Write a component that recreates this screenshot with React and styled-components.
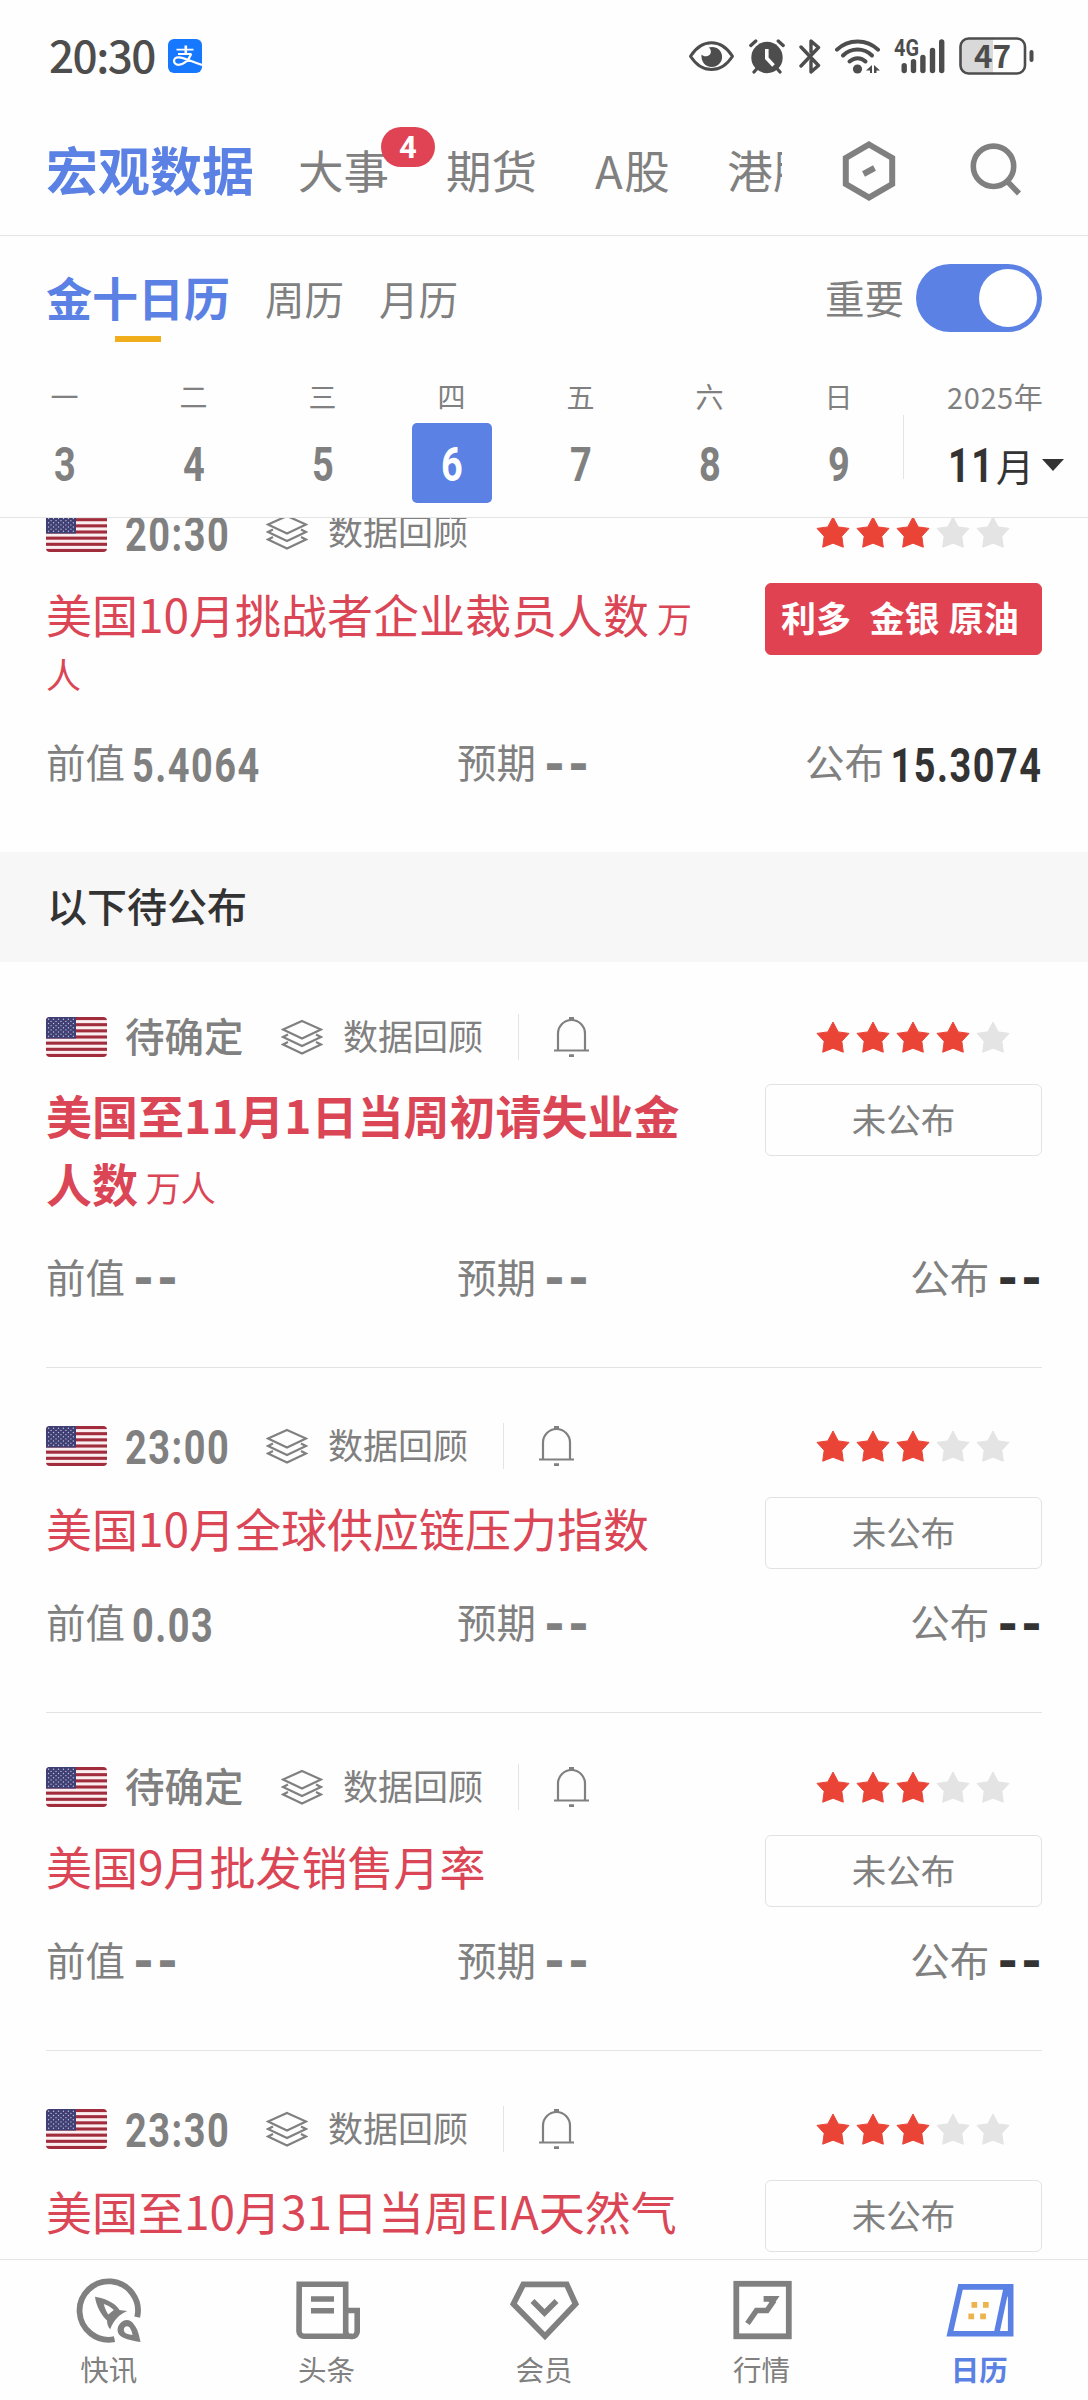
import React from 'react';
import styled, { createGlobalStyle } from 'styled-components';

const GREY = '#808080';
const BLUE = '#5a81e3';
const RED = '#db4656';
const LINE = '#e4e4e4';
const CJK = '"Noto Sans CJK SC", "Noto Sans", sans-serif';
const DIGITS = 'Roboto, "Liberation Sans", sans-serif';

const GlobalStyle = createGlobalStyle`
  * { box-sizing: border-box; }
  body { margin: 0; background: #fefefe; font-family: ${CJK}; }
  svg { display: block; flex: none; }
`;

/* condensed bold numerals */
const Num = styled.span`
  display: inline-block;
  flex: none;
  font: 700 48px/56px ${DIGITS};
  letter-spacing: ${(p) => (p.$single ? 0 : 1.9)}px;
  transform: scaleX(0.79);
  transform-origin: ${(p) => p.$origin || 'left'} center;
`;

const Screen = styled.div`
  width: 1088px;
  height: 2400px;
  display: flex;
  flex-direction: column;
  overflow: hidden;
  color: ${GREY};
  background: #fefefe;
`;

/* ---------- status bar ---------- */
const StatusBar = styled.header`
  height: 112px;
  padding: 0 54px 0 49px;
  display: flex;
  align-items: center;
  color: #4d4d4d;
`;
const Clock = styled.span`
  width: 119px;
  font-size: 44px;
  line-height: 56px;
  font-weight: 500;
  letter-spacing: -1.5px;
  padding-bottom: 4px;
`;
const StatusIcons = styled.div`
  margin-left: auto;
  display: flex;
  gap: 14px;
  align-items: center;
`;

/* ---------- top tabs ---------- */
const TopNav = styled.nav`
  height: 124px;
  padding: 0 66px 6px 46px;
  display: flex;
  align-items: center;
  border-bottom: 1px solid ${LINE};
`;
const TopTabs = styled.div`
  width: 736px;
  display: flex;
  align-items: center;
  overflow: hidden;
  white-space: nowrap;
  height: 100px;
`;
const TopTab = styled.span`
  position: relative;
  flex: none;
  font-size: ${(p) => (p.$active ? 52 : 45.5)}px;
  font-weight: ${(p) => (p.$active ? 700 : 400)};
  color: ${(p) => (p.$active ? BLUE : GREY)};
  line-height: 72px;
  letter-spacing: ${(p) => (p.$wide ? 1.5 : 0)}px;
  padding-bottom: 4px;
  margin-right: ${(p) => p.$gap}px;
`;
const Badge = styled.span`
  position: absolute;
  left: 83px;
  top: -6px;
  width: 54px;
  height: 40px;
  border-radius: 20px;
  background: #e04454;
  color: #fff;
  font: 700 31px/42px ${DIGITS};
  text-align: center;
`;
const TopActions = styled.div`
  margin-left: auto;
  display: flex;
  align-items: center;
  gap: 72px;
`;

/* ---------- calendar header ---------- */
const SubNav = styled.div`
  height: 124px;
  padding: 0 46px;
  display: flex;
  align-items: center;
`;
const SubTab = styled.span`
  display: flex;
  flex-direction: column;
  align-items: center;
  font-size: ${(p) => (p.$active ? 46 : 39.5)}px;
  font-weight: ${(p) => (p.$active ? 700 : 400)};
  color: ${(p) => (p.$active ? BLUE : GREY)};
  line-height: 60px;
  margin-right: 35px;
  padding-bottom: ${(p) => (p.$active ? 0 : 1)}px;
  padding-top: ${(p) => (p.$active ? 12 : 0)}px;

  &::after {
    content: '';
    display: ${(p) => (p.$active ? 'block' : 'none')};
    width: 46px;
    height: 6px;
    margin-top: 10px;
    background: #f0ad1c;
  }
`;
const Important = styled.label`
  margin-left: auto;
  display: flex;
  align-items: center;
  gap: 12px;
  font-size: 39.5px;
  line-height: 60px;
`;
const ImportantText = styled.span`
  padding-bottom: 2px;
`;
const Switch = styled.span`
  width: 126px;
  height: 68px;
  border-radius: 34px;
  padding: 5px;
  background: ${BLUE};
  display: flex;
  justify-content: flex-end;
`;
const Knob = styled.span`
  width: 58px;
  height: 58px;
  border-radius: 50%;
  background: #fff;
`;
const Week = styled.div`
  height: 158px;
  flex: none;
  display: flex;
  border-bottom: 1px solid ${LINE};
`;
const Days = styled.div`
  width: 903px;
  display: grid;
  grid-template-columns: repeat(7, 129px);
`;
const Day = styled.div`
  display: flex;
  flex-direction: column;
  align-items: center;
`;
const DayName = styled.span`
  font-size: 28px;
  line-height: 40px;
  margin-top: 16px;
`;
const DayNumber = styled.span`
  margin-top: 7px;
  width: 80px;
  height: 80px;
  padding-top: 3px;
  border-radius: 5px;
  display: flex;
  align-items: center;
  justify-content: center;
  color: ${(p) => (p.$selected ? '#fff' : GREY)};
  background: ${(p) => (p.$selected ? BLUE : 'transparent')};
`;
const MonthPicker = styled.div`
  display: flex;
  align-items: flex-start;
`;
const MonthRule = styled.span`
  width: 1px;
  height: 64px;
  margin-top: 55px;
  background: ${LINE};
`;
const MonthText = styled.div`
  padding-left: 43px;
  display: flex;
  flex-direction: column;
`;
const Year = styled.span`
  margin-top: 16px;
  font-size: 29px;
  line-height: 40px;
  letter-spacing: 0.6px;
`;
const Month = styled.span`
  margin-top: 20px;
  display: flex;
  align-items: center;
  color: #333;
  font-size: 38px;
  line-height: 56px;
`;
const MonthDigits = styled.span`
  display: flex;
  width: 49px;
  padding-left: 1px;
  padding-top: 2px;
`;
const Caret = styled.span`
  margin: 0 0 0 8px;
  border: 11px solid transparent;
  border-top: 12px solid #333;
  border-bottom: 0;
`;

/* ---------- events ---------- */
const List = styled.main`
  flex: 1;
  min-height: 0;
  overflow: hidden;
`;
const Item = styled.article`
  margin: ${(p) => (p.$scrolled ? '-65px' : '0')} 46px 0;
  padding: ${(p) => (p.$scrolled ? 50 : 49)}px 0 59px;
  border-bottom: 1px solid ${(p) => (p.$scrolled ? 'transparent' : LINE)};
  height: ${(p) => (p.$scrolled ? '399px' : 'auto')};
`;
const Meta = styled.div`
  height: ${(p) => (p.$pending ? 51 : 58)}px;
  display: flex;
  align-items: center;
`;
const Time = styled.span`
  margin-left: 18px;
  width: ${(p) => (p.$pending ? 156 : 141)}px;
  display: flex;
  white-space: nowrap;
  font-size: 39.5px;
  font-weight: 500;
  line-height: 50px;
  padding-bottom: ${(p) => (p.$pending ? 4 : 0)}px;
  padding-top: ${(p) => (p.$pending ? 0 : 5)}px;
`;
const Review = styled.span`
  margin-left: 20px;
  width: 140px;
  font-size: 35px;
  line-height: 50px;
  padding-bottom: 4px;
`;
const MetaRule = styled.span`
  width: 1px;
  height: 46px;
  margin: 0 35px;
  background: ${LINE};
`;
const Stars = styled.div`
  margin-left: auto;
  margin-right: 32px;
  display: flex;
  gap: 6px;
`;
const Body = styled.div`
  margin-top: 19px;
  display: flex;
  justify-content: space-between;
  align-items: flex-start;
`;
const Title = styled.h3`
  margin: 0;
  width: 655px;
  font-size: 35px;
  font-weight: 400;
  line-height: 1.478;
  color: ${RED};
  word-break: break-all;
`;
const TitleText = styled.span`
  font-size: 46px;
  font-weight: ${(p) => (p.$bold ? 700 : 400)};
`;
const Pill = styled.div`
  width: 277px;
  height: 72px;
  margin: 3px 0 -9px;
  border-radius: 6px;
  border: 1px solid ${(p) => (p.$filled ? '#e04252' : '#e2e2e2')};
  background: ${(p) => (p.$filled ? '#e04252' : 'transparent')};
  color: ${(p) => (p.$filled ? '#fff' : GREY)};
  font-size: ${(p) => (p.$filled ? 35 : 34.5)}px;
  font-weight: ${(p) => (p.$filled ? 700 : 400)};
  line-height: 66px;
  text-align: ${(p) => (p.$filled ? 'left' : 'center')};
  padding-left: ${(p) => (p.$filled ? 15 : 0)}px;
  word-spacing: 1.3px;
  white-space: pre;
`;
const Values = styled.div`
  margin-top: ${(p) => (p.$after ? 33 : 31)}px;
  height: 60px;
  display: grid;
  grid-template-columns: 411px 1fr auto;
`;
const Value = styled.div`
  display: flex;
  align-items: center;
`;
const Label = styled.span`
  width: 79px;
  font-size: 39.5px;
  line-height: 56px;
  padding-bottom: 4px;
`;
const Figure = styled.span`
  display: flex;
  justify-content: ${(p) => (p.$strong ? 'flex-end' : 'flex-start')};
  width: ${(p) => (p.$strong ? 158 : 140)}px;
  padding-left: ${(p) => (p.$strong ? 0 : 7)}px;
  color: ${(p) => (p.$strong ? '#333' : GREY)};
  padding-top: 5px;
`;
const Dashes = styled.span`
  margin: 0 1px 0 4px;
  color: ${(p) => (p.$strong ? '#333' : GREY)};
  font: 700 48px/56px "DejaVu Sans Mono", monospace;
  letter-spacing: -5px;
  padding-bottom: 1px;
`;
const Section = styled.h2`
  margin: 0;
  height: 110px;
  padding-left: 47px;
  background: #f7f7f7;
  color: #333;
  font-size: 40px;
  font-weight: 500;
  line-height: 106px;
`;

/* ---------- bottom tabs ---------- */
const BottomNav = styled.nav`
  height: 141px;
  flex: none;
  border-top: 1px solid ${LINE};
  display: grid;
  grid-template-columns: repeat(5, 1fr);
`;
const BottomTab = styled.div`
  display: flex;
  flex-direction: column;
  align-items: center;
  padding-top: 14px;
  color: ${(p) => (p.$active ? BLUE : GREY)};
  font-weight: ${(p) => (p.$active ? 700 : 400)};
  font-size: 28.5px;
  line-height: 46px;
`;

/* ---------- drawings ---------- */
const Alipay = () => (
  <svg width="34" height="34" viewBox="0 0 34 34">
    <rect width="34" height="34" rx="6" fill="#1677ff" />
    <g fill="none" stroke="#fff">
      <path strokeWidth="1.8" d="M8.500 10.700h17M10 15h13.500" />
      <path strokeWidth="2.600" d="M17.800 6.500V15" />
      <path strokeWidth="2.200" d="M23.200 15c-2.500 6.500-8 10.800-12.700 10.800-6 0-6-8 .3-7.500 6 .5 12 4 23.200 7.700" />
    </g>
  </svg>
);
const Eye = () => (
  <svg width="47" height="34" viewBox="0 0 47 34">
    <path d="M2.500 17.200C14-.8 33-.8 44.500 17.200 33 35 14 35 2.500 17.200Z" fill="none" stroke="currentColor" strokeWidth="3" strokeLinejoin="round" />
    <path d="M13.500 15.500c3 3.500 10 1.500 9.300-3.600-.2-1.700-1.200-2.800-2.200-3.300 7-2.200 13.500 2.500 13.500 9.200 0 6-4.600 10.200-10.300 10.200-6.500 0-11-5.500-10.300-12.500Z" fill="currentColor" />
  </svg>
);
const Alarm = () => (
  <svg width="36" height="35" viewBox="0 0 36 35">
    <circle cx="18" cy="18.500" r="15.700" fill="currentColor" />
    <path d="M1.800 6.500 6.800 2M34.200 6.500 29.200 2M5 33l3.500-4M31 33l-3.500-4" stroke="currentColor" strokeWidth="3.300" strokeLinecap="round" />
    <path d="M17.800 10v9.200l6.700 7.300" fill="none" stroke="#fefefe" strokeWidth="3.600" />
  </svg>
);
const Bluetooth = () => (
  <svg width="22" height="35" viewBox="0 0 22 35">
    <path d="m2 8 17.500 18.500-7.500 6.500V22M2 27 19.500 8.500 12 2v11" fill="none" stroke="currentColor" strokeWidth="3.400" strokeLinejoin="round" strokeLinecap="round" />
  </svg>
);
const Wifi = () => (
  <svg width="45" height="35" viewBox="0 0 45 35">
    <g fill="none" stroke="currentColor" strokeWidth="4" strokeLinecap="round">
      <path d="M2 10.700c11-11 30-11 41 0" />
      <path d="M8 16.500c8-8 21-8 29 0" />
      <path d="M14.500 22.500c5-4.500 11.500-4.500 16 0" />
    </g>
    <circle cx="22.500" cy="30" r="4.600" fill="currentColor" />
    <path d="m31 31.500 6-5.500v8h-2v-2.500ZM39 26l6 5.500h-3.500V34H39Z" fill="currentColor" />
  </svg>
);
const Signal = () => (
  <svg width="51" height="35" viewBox="0 0 51 35">
    <g stroke="currentColor" strokeWidth="5.400" strokeLinecap="round">
      <path d="M10.200 26.700v4.800M19.500 22.800v8.700M28.900 18.500v13M38.500 11.500v20M47.700 2.900v28.600" />
    </g>
    <text x="0" y="17.300" fill="currentColor" fontFamily={DIGITS} fontWeight="700" fontSize="23.500" textLength="25" lengthAdjust="spacingAndGlyphs">4G</text>
  </svg>
);
const Battery = () => (
  <svg width="75" height="38" viewBox="0 0 75 38">
    <path d="M34 2H9a7 7 0 0 0-7 7v20a7 7 0 0 0 7 7h25Z" fill="#d9d9d9" />
    <rect x="1.500" y="1.500" width="64.500" height="35" rx="8" fill="none" stroke="currentColor" strokeWidth="2.600" />
    <path d="M72.500 15v8" stroke="currentColor" strokeWidth="4" strokeLinecap="round" />
    <text x="33.500" y="31" textAnchor="middle" fill="currentColor" fontFamily='"Noto Sans CJK SC", sans-serif' fontWeight="700" fontSize="31.500">47</text>
  </svg>
);
const Hexagon = () => (
  <svg width="54" height="62" viewBox="0 0 54 62">
    <path d="M27 4.500 50.200 18v26L27 57.500 3.800 44V18Z" fill="none" stroke="currentColor" strokeWidth="6" />
    <path d="m21.500 34 11-6" stroke="currentColor" strokeWidth="6" />
  </svg>
);
const Search = () => (
  <svg width="54" height="60" viewBox="0 0 54 60">
    <ellipse cx="25.500" cy="25.300" rx="20.200" ry="20.200" fill="none" stroke="currentColor" strokeWidth="5.600" />
    <path d="m38.500 39.500 12.500 13" stroke="currentColor" strokeWidth="5.600" />
  </svg>
);
const Flag = () => (
  <svg width="61" height="40" viewBox="0 0 61 40" style={{ borderRadius: 4 }}>
    <rect width="61" height="40" fill="#fbeef0" />
    {Array.from({ length: 7 }, (_, i) => (
      <rect key={i} y={(i * 80) / 13} width="61" height={40 / 13} fill="#a02c3c" />
    ))}
    <rect width="30" height="21.500" fill="#3f3f74" />
    {Array.from({ length: 9 }, (_, r) =>
      Array.from({ length: r % 2 ? 5 : 6 }, (_, c) => (
        <circle key={`${r}-${c}`} cx={2.6 + c * 4.95 + (r % 2 ? 2.48 : 0)} cy={2.3 + r * 2.12} r="0.700" fill="#c0c0dc" />
      ))
    )}
  </svg>
);
const Layers = () => (
  <svg width="42" height="36" viewBox="0 0 42 36">
    <g fill="none" stroke="currentColor" strokeWidth="2.200">
      <path d="M21 2 40 10.500 21 19.500 2 10.500Z" />
      <path d="M7 15.500 2 18l19 9 19-9-5-2.500" />
      <path d="M7 23 2 25.500l19 9 19-9L35 23" />
    </g>
  </svg>
);
const Bell = () => (
  <svg width="35" height="40" viewBox="0 0 35 40">
    <path d="M0 33.500h35M4 33.500V16.500a13.500 13.500 0 0 1 27 0v17" fill="none" stroke="currentColor" strokeWidth="2.200" />
    <path d="M15 0h5v4h-5ZM15 37.200h5V40h-5Z" fill="currentColor" />
  </svg>
);
const Star = ({ on }) => {
  const color = on ? '#ea4437' : '#e4e4e4';
  return (
    <svg width="34" height="32" viewBox="0 0 34 32">
      <path d="m17 1 5.200 9.900L33 12.400l-7.200 7.900 1.500 10.900L17 27.200 6.700 31.200l1.500-10.900L1 12.400l10.800-1.500Z" fill={color} stroke={color} strokeWidth="1" />
    </svg>
  );
};
const icons = {
  flash: (
    <>
      <path d="M64.200 43.200A29.200 29.200 0 1 0 41.500 65.200" fill="none" stroke="currentColor" strokeWidth="5.800" />
      <path fillRule="evenodd" fill="currentColor" d="M22 22.700C36 25 44 31 46.500 36c2 .5 5 .5 7.800.9-7 2.800-14 9-17 18.400C35 53 34 50 34 46.500 29 42 23 32 22 22.700Zm8.800 7.300c1 4 2.500 7.500 4.500 10.500l5.500-4.500c-3-3-6.500-5-10-6Z" />
      <path fillRule="evenodd" fill="currentColor" d="M67.500 68C66 60 64.500 55 61.300 51 58.300 45.500 52.500 44.500 48.500 48c-4.200 3.500-5 9-2.500 12.500 3.500 4 11.500 6 21.500 7.500ZM52 53c2-1.500 4.500-.5 5.500 2 1.200 2 1.700 4 2 6-4-.5-6.500-1-8-3-1-1.500-1-3.500.5-5Z" />
    </>
  ),
  news: (
    <>
      <path d="M9.200 10.300h46.500v52H14a5 5 0 0 1-5-5ZM55.700 36.500h11.500v21a5 5 0 0 1-5 5h-1.500a5 5 0 0 1-5-5M50 62.300h12" fill="none" stroke="currentColor" strokeWidth="5.600" />
      <path d="M21 24.900h23M21 36.700h23" stroke="currentColor" strokeWidth="5.500" />
    </>
  ),
  member: (
    <>
      <path d="M15.300 10.400h43.400L67.600 30 37 62.200 5.400 30Z" fill="none" stroke="currentColor" strokeWidth="5.800" />
      <path d="m24.500 27 12 12 12-12" fill="none" stroke="currentColor" strokeWidth="5.600" />
    </>
  ),
  market: (
    <>
      <rect x="10.300" y="9.800" width="52.500" height="52.500" fill="none" stroke="currentColor" strokeWidth="5.800" />
      <path d="m21.500 49.500 9-13h10.500l7-10" fill="none" stroke="currentColor" strokeWidth="5.600" />
      <path d="M37.600 22h16L47 31.500l-4.500-3.700h-4.900Z" fill="currentColor" />
    </>
  ),
  calendar: (
    <>
      <path d="M17.500 12.900h50.200v46.900H7ZM63.500 12.900 53.500 59.800" fill="none" stroke="currentColor" strokeWidth="5.600" />
      <path d="M61 13h9v12l-5-1Z" fill="currentColor" />
      <path d="M28.500 28h5.700v5.700h-5.700ZM40 28h5.700v5.700H40ZM25.400 39.500h5.700v5.700h-5.700ZM37.200 39.500h5.700v5.700h-5.700Z" fill="#edb34c" />
    </>
  ),
};

/* ---------- data ---------- */
const week = [['一', 3], ['二', 4], ['三', 5], ['四', 6], ['五', 7], ['六', 8], ['日', 9]];
const released = {
  time: '20:30', stars: 3, title: '美国10月挑战者企业裁员人数', unit: '万人',
  pill: '利多  金银 原油', prev: '5.4064', actual: '15.3074', scrolled: true,
};
const upcoming = [
  { time: '待确定', pending: true, stars: 4, title: '美国至11月1日当周初请失业金人数', unit: '万人', bold: true },
  { time: '23:00', stars: 3, title: '美国10月全球供应链压力指数', prev: '0.03' },
  { time: '待确定', pending: true, stars: 3, title: '美国9月批发销售月率' },
  { time: '23:30', stars: 3, title: '美国至10月31日当周EIA天然气' },
];
const tabs = [['快讯', 'flash'], ['头条', 'news'], ['会员', 'member'], ['行情', 'market'], ['日历', 'calendar']];

const Reading = ({ label, value, strong }) => (
  <Value>
    <Label>{label}</Label>
    {value ? (
      <Figure $strong={strong}><Num $origin={strong ? 'right' : 'left'}>{value}</Num></Figure>
    ) : (
      <Dashes $strong={strong}>--</Dashes>
    )}
  </Value>
);

const Event = ({ e }) => (
  <Item $scrolled={e.scrolled}>
    <Meta $pending={e.pending}>
      <Flag />
      <Time $pending={e.pending}>{e.pending ? e.time : <Num>{e.time}</Num>}</Time>
      <Layers />
      <Review>数据回顾</Review>
      {!e.scrolled && (
        <>
          <MetaRule />
          <Bell />
        </>
      )}
      <Stars>
        {[0, 1, 2, 3, 4].map((i) => <Star key={i} on={i < e.stars} />)}
      </Stars>
    </Meta>
    <Body>
      <Title>
        <TitleText $bold={e.bold}>{e.title}</TitleText>
        {e.unit && ` ${e.unit}`}
      </Title>
      <Pill $filled={!!e.pill}>{e.pill || '未公布'}</Pill>
    </Body>
    <Values $after={e.scrolled}>
      <Reading label="前值" value={e.prev} />
      <Reading label="预期" />
      <Reading label="公布" value={e.actual} strong />
    </Values>
  </Item>
);

export default function App() {
  return (
    <Screen>
      <GlobalStyle />
      <StatusBar>
        <Clock>20:30</Clock>
        <Alipay />
        <StatusIcons>
          <Eye /><Alarm /><Bluetooth /><Wifi /><Signal /><Battery />
        </StatusIcons>
      </StatusBar>
      <TopNav>
        <TopTabs>
          <TopTab $active $gap={44}>宏观数据</TopTab>
          <TopTab $gap={57}>大事<Badge>4</Badge></TopTab>
          <TopTab $gap={58}>期货</TopTab>
          <TopTab $wide $gap={56}>A股</TopTab>
          <TopTab $gap={0}>港股</TopTab>
        </TopTabs>
        <TopActions>
          <Hexagon />
          <Search />
        </TopActions>
      </TopNav>
      <SubNav>
        <SubTab $active>金十日历</SubTab>
        <SubTab>周历</SubTab>
        <SubTab>月历</SubTab>
        <Important>
          <ImportantText>重要</ImportantText>
          <Switch><Knob /></Switch>
        </Important>
      </SubNav>
      <Week>
        <Days>
          {week.map(([name, n]) => (
            <Day key={n}>
              <DayName>{name}</DayName>
              <DayNumber $selected={n === 6}><Num $single $origin="center">{n}</Num></DayNumber>
            </Day>
          ))}
        </Days>
        <MonthPicker>
          <MonthRule />
          <MonthText>
            <Year>2025年</Year>
            <Month><MonthDigits><Num>11</Num></MonthDigits>月<Caret /></Month>
          </MonthText>
        </MonthPicker>
      </Week>
      <List>
        <Event e={released} />
        <Section>以下待公布</Section>
        {upcoming.map((e, i) => <Event key={i} e={e} />)}
      </List>
      <BottomNav>
        {tabs.map(([name, icon]) => (
          <BottomTab key={name} $active={icon === 'calendar'}>
            <svg width="72" height="72" viewBox="0 0 72 72">{icons[icon]}</svg>
            {name}
          </BottomTab>
        ))}
      </BottomNav>
    </Screen>
  );
}
